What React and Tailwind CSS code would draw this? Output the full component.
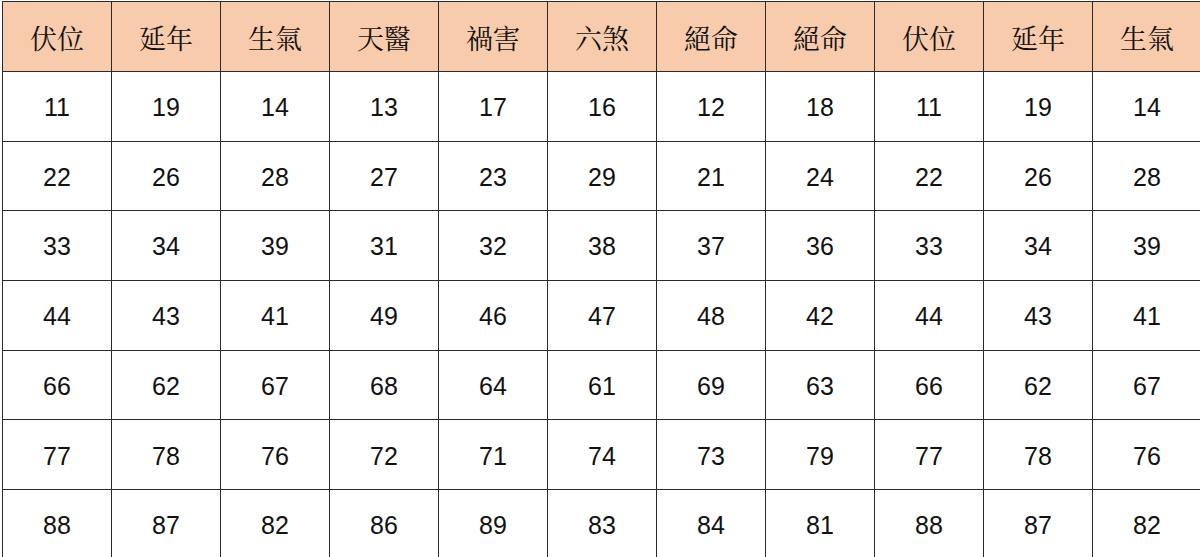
import React from "react";

const headers = ["伏位", "延年", "生氣", "天醫", "禍害", "六煞", "絕命", "絕命", "伏位", "延年", "生氣"];

const rows = [
  ["11", "19", "14", "13", "17", "16", "12", "18", "11", "19", "14"],
  ["22", "26", "28", "27", "23", "29", "21", "24", "22", "26", "28"],
  ["33", "34", "39", "31", "32", "38", "37", "36", "33", "34", "39"],
  ["44", "43", "41", "49", "46", "47", "48", "42", "44", "43", "41"],
  ["66", "62", "67", "68", "64", "61", "69", "63", "66", "62", "67"],
  ["77", "78", "76", "72", "71", "74", "73", "79", "77", "78", "76"],
  ["88", "87", "82", "86", "89", "83", "84", "81", "88", "87", "82"],
];

export default function App() {
  return (
    <div className="w-[1200px] h-[557px] overflow-hidden bg-white pt-px pl-[2px]">
      <div className="grid grid-cols-[repeat(11,109px)] w-max border-l border-t border-[#2a2a2a]">
        {headers.map((h, i) => (
          <div
            key={"h" + i}
            className="h-[70px] pt-[3px] flex items-center justify-center bg-[#f8cbad] border-r border-b border-[#2a2a2a] text-[27px] text-[#111] font-['Noto_Serif_CJK_TC','Noto_Sans_CJK_TC',serif]"
          >
            {h}
          </div>
        ))}
        {rows.map((r, ri) =>
          r.map((v, ci) => (
            <div
              key={ri + "-" + ci}
              className="h-[69.7px] pt-[3px] flex items-center justify-center bg-white border-r border-b border-[#2a2a2a] text-[25px] text-[#111] font-['Liberation_Sans',Arial,sans-serif]"
            >
              {v}
            </div>
          ))
        )}
      </div>
    </div>
  );
}
